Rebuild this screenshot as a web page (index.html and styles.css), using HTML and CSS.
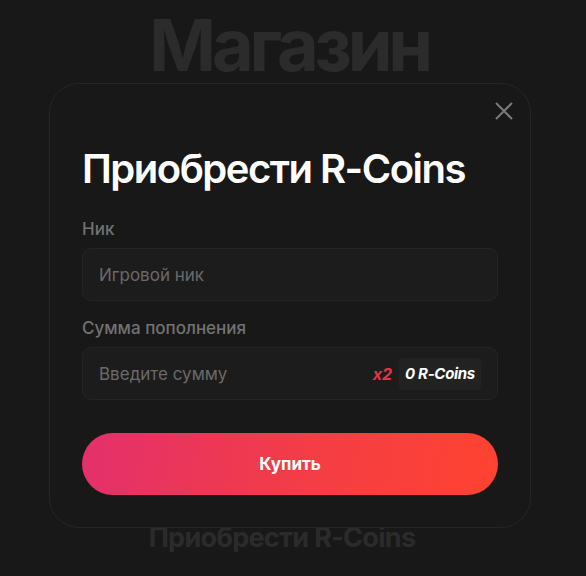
FILE: index.html
```html
<!DOCTYPE html>
<html lang="ru">
<head>
<meta charset="utf-8">
<title>Магазин</title>
<link rel="stylesheet" href="styles.css">
</head>
<body>
<main class="page">
  <h1 class="page-title">Магазин</h1>
  <section class="section">
    <h2 class="section-title">Приобрести R-Coins</h2>
  </section>
</main>

<div class="modal">
  <button class="close" aria-label="Закрыть">
    <svg width="18" height="18" viewBox="0 0 18 18"><path d="M1 1 L17 17 M17 1 L1 17" stroke="#7a7a7a" stroke-width="2" fill="none"/></svg>
  </button>
  <h2 class="modal-title">Приобрести R-Coins</h2>
  <label class="label">Ник</label>
  <div class="field">
    <span class="placeholder">Игровой ник</span>
  </div>
  <label class="label label-2">Сумма пополнения</label>
  <div class="field field-amount">
    <span class="placeholder">Введите сумму</span>
    <span class="mult">x2</span>
    <span class="badge">0 R-Coins</span>
  </div>
  <button class="buy">Купить</button>
</div>
</body>
</html>
```

FILE: styles.css
```css
* { box-sizing: border-box; }
html, body {
  margin: 0;
  height: 100%;
  background: #181818;
  font-family: Inter, "Noto Sans", sans-serif;
  overflow: hidden;
}
.page {
  display: flex;
  flex-direction: column;
  align-items: center;
}
.page-title {
  margin: 8px 8px 0 0;
  font-size: 72px;
  line-height: 74px;
  font-weight: 700;
  color: #2b2b2b;
  letter-spacing: -4.2px;
}
.section {
  margin-top: 440px;
  margin-right: 22px;
}
.section-title {
  margin: 0;
  font-size: 27px;
  line-height: 32px;
  font-weight: 700;
  color: #2b2b2b;
  letter-spacing: -0.7px;
}
.modal {
  position: absolute;
  left: 49px;
  top: 83px;
  width: 482px;
  height: 445px;
  background: #181818;
  border: 1px solid #262626;
  border-radius: 30px;
  padding: 61px 32px 32px 32px;
  display: flex;
  flex-direction: column;
}
.close {
  position: absolute;
  right: 17px;
  top: 18px;
  width: 18px;
  height: 18px;
  padding: 0;
  border: 0;
  background: none;
  display: flex;
}
.modal-title {
  margin: 0;
  font-size: 40px;
  line-height: 48px;
  font-weight: 600;
  color: #ffffff;
  letter-spacing: -1.5px;
}
.label {
  margin-top: 26px;
  font-size: 17px;
  line-height: 20px;
  font-weight: 500;
  color: #727272;
}
.label-2 { margin-top: 17px; }
.field {
  margin-top: 9px;
  height: 53px;
  background: #1c1c1c;
  border: 1px solid #252525;
  border-radius: 9px;
  padding: 0 16px 0 16px;
  display: flex;
  align-items: center;
}
.field-amount { padding-right: 16px; }
.placeholder {
  font-size: 17px;
  color: #6a6a6a;
  flex: 1;
}
.mult {
  font-size: 16px;
  font-weight: 700;
  font-style: italic;
  color: #e8324a;
  margin-right: 7px;
}
.badge {
  height: 32px;
  width: 82px;
  background: #222222;
  border-radius: 4px;
  display: flex;
  align-items: center;
  justify-content: center;
  font-size: 15px;
  font-weight: 700;
  font-style: italic;
  color: #ffffff;
  letter-spacing: -0.3px;
}
.buy {
  margin-top: 33px;
  height: 62px;
  border: 0;
  border-radius: 31px;
  background: linear-gradient(100deg, #e3306c 0%, #f43d45 55%, #ff4330 100%);
  color: #ffffff;
  font-family: Inter, "Noto Sans", sans-serif;
  font-size: 17px;
  font-weight: 700;
}
```
